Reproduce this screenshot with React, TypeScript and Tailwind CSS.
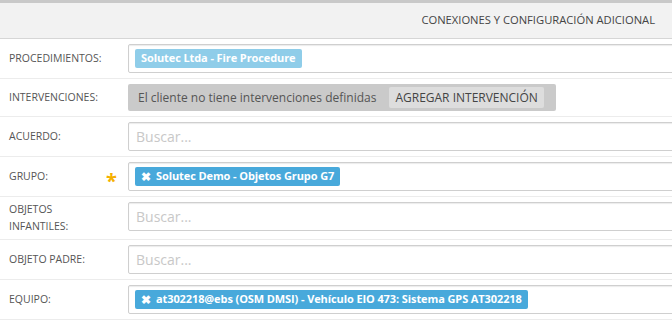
import React from "react";

const font = { fontFamily: '"Open Sans", "Liberation Sans", sans-serif' };

function Row({ label, children, star, tall }: { label: React.ReactNode; children: React.ReactNode; star?: boolean; tall?: boolean }) {
  return (
    <div className="flex border-b border-[#ececec] py-[5px]">
      <div className={`relative w-[128px] shrink-0 pl-[9px] flex items-center text-[10.5px] text-[#555] ${tall ? "leading-[17px] h-[32px]" : ""}`}>
        {label}
        {star && <span className="absolute left-[106px] top-[4px] text-[20px] text-[#f5b000] font-bold">*</span>}
      </div>
      {children}
    </div>
  );
}

function Input({ children }: { children?: React.ReactNode }) {
  return (
    <div className="w-[600px] shrink-0 h-[29px] border border-[#cfcfcf] rounded-[2px] shadow-[inset_0_1px_1px_rgba(0,0,0,0.08)] bg-white flex items-center px-[6px]">
      {children ?? <span className="text-[14px] text-[#c8c8c8] pl-[1px]">Buscar...</span>}
    </div>
  );
}

function Pill({ text, light, x }: { text: string; light?: boolean; x?: boolean }) {
  return (
    <span className={`h-[19px] flex items-center rounded-[2px] px-[6px] text-[11px] font-bold text-white ${light ? "bg-[#8fcde9]" : "bg-[#48a9db]"}`}>
      {x && <span className="mr-[5px] text-[12px] leading-none">✖</span>}
      <span className="tracking-[-0.1px]">{text}</span>
    </span>
  );
}

export default function App() {
  return (
    <div style={font} className="w-[672px] h-[329px] overflow-hidden bg-white">
      <div className="h-[3px] bg-[#c9c9c9]" />
      <div className="h-[36px] bg-[#f2f2f2] border-b border-[#d6d6d6] flex items-center justify-end pr-[17px] text-[11.2px] text-[#444]">
        CONEXIONES Y CONFIGURACIÓN ADICIONAL
      </div>
      <Row label="PROCEDIMIENTOS:">
        <Input>
          <Pill light text="Solutec Ltda - Fire Procedure" />
        </Input>
      </Row>
      <Row label="INTERVENCIONES:">
        <div className="h-[27px] w-[428px] shrink-0 bg-[#cacaca] rounded-[2px] flex items-center pl-[10px] pr-[10px] text-[12px] text-[#555]">
          <span>El cliente no tiene intervenciones definidas</span>
          <span className="ml-[13px] h-[21px] px-[6px] bg-[#dddddd] rounded-[2px] flex items-center text-[12px] text-[#444]">AGREGAR INTERVENCIÓN</span>
        </div>
      </Row>
      <Row label="ACUERDO:">
        <Input />
      </Row>
      <Row label="GRUPO:" star>
        <Input>
          <Pill x text="Solutec Demo - Objetos Grupo G7" />
        </Input>
      </Row>
      <Row label={<span>OBJETOS<br />INFANTILES:</span>} tall>
        <div className="self-start">
          <Input />
        </div>
      </Row>
      <Row label="OBJETO PADRE:">
        <Input />
      </Row>
      <Row label="EQUIPO:">
        <Input>
          <Pill x text="at302218@ebs (OSM DMSI) - Vehículo EIO 473: Sistema GPS AT302218" />
        </Input>
      </Row>
    </div>
  );
}
